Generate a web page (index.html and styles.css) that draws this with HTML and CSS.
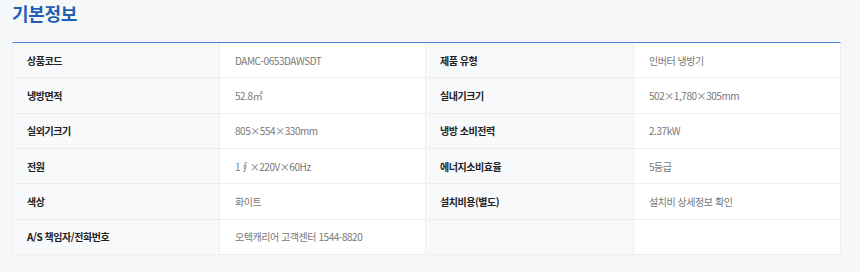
FILE: index.html
```html
<!DOCTYPE html>
<html lang="ko">
<head>
<meta charset="utf-8">
<link rel="stylesheet" href="styles.css">
</head>
<body>
<div class="page">
  <h2 class="title">기본정보</h2>
  <div class="spec">
    <div class="row">
      <div class="th">상품코드</div><div class="td">DAMC-0653DAWSDT</div>
      <div class="th">제품 유형</div><div class="td">인버터 냉방기</div>
    </div>
    <div class="row">
      <div class="th">냉방면적</div><div class="td">52.8㎡</div>
      <div class="th">실내기크기</div><div class="td">502×1,780×305mm</div>
    </div>
    <div class="row">
      <div class="th">실외기크기</div><div class="td">805×554×330mm</div>
      <div class="th">냉방 소비전력</div><div class="td">2.37kW</div>
    </div>
    <div class="row">
      <div class="th">전원</div><div class="td">1∮×220V×60Hz</div>
      <div class="th">에너지소비효율</div><div class="td">5등급</div>
    </div>
    <div class="row">
      <div class="th">색상</div><div class="td">화이트</div>
      <div class="th">설치비용(별도)</div><div class="td">설치비 상세정보 확인</div>
    </div>
    <div class="row">
      <div class="th">A/S 책임자/전화번호</div><div class="td">오텍캐리어 고객센터 1544-8820</div>
      <div class="th"></div><div class="td"></div>
    </div>
  </div>
</div>
</body>
</html>
```

FILE: styles.css
```css
* { box-sizing: border-box; }
html, body { margin: 0; padding: 0; }
body {
  background: #f6f7f9;
  font-family: "Noto Sans CJK KR", "Noto Sans", sans-serif;
  width: 860px;
  height: 272px;
  overflow: hidden;
}
.page {
  padding: 0 19px 0 12px;
}
.title {
  margin: 0;
  font-size: 18px;
  font-weight: 700;
  color: #1f5fb3;
  line-height: 26px;
  height: 42px;
  letter-spacing: -0.3px;
}
.spec {
  border-top: 1px solid #4d8ad6;
  border-left: 1px solid #eceef1;
  border-right: 1px solid #eceef1;
}
.row {
  display: grid;
  grid-template-columns: 206px 207px 207px 207px;
  height: 35.33px;
  border-bottom: 1px solid #eceef1;
}
.th, .td {
  display: flex;
  align-items: center;
  font-size: 10px;
  letter-spacing: -0.45px;
}
.th {
  background: #f8f9fb;
  color: #222;
  font-weight: 700;
  padding-left: 14px;
}
.td {
  background: #fff;
  color: #777;
  padding-left: 15px;
  border-left: 1px solid #eceef1;
  border-right: 1px solid #eceef1;
}
.row .td:last-child { border-right: 0; }
```
